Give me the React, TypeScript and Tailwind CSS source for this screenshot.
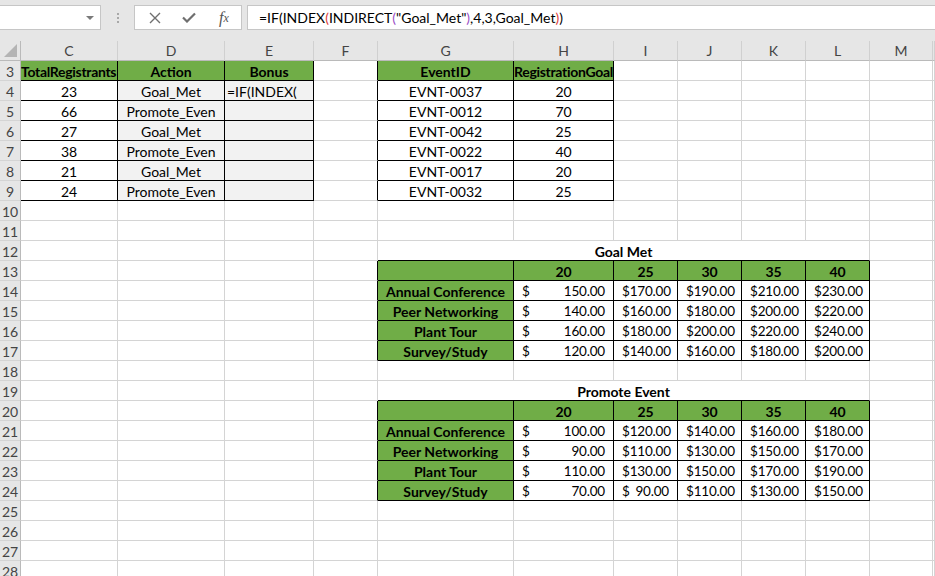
import clsx from "clsx";

type Cell = {
  t?: string;
  b?: boolean;
  bg?: "g" | "s";
  box?: boolean;
  al?: "c" | "l" | "acc" | "ov";
  span?: number;
};

const COLS = ["C", "D", "E", "F", "G", "H", "I", "J", "K", "L", "M", "N"];
const ROWS = Array.from({ length: 26 }, (_, i) => i + 3);

const cells: Record<string, Cell> = {};
const skip = new Set<string>();
const set = (k: string, c: Cell) => {
  cells[k] = c;
};

// left table
set("C3", { t: "TotalRegistrants", b: true, bg: "g", box: true, al: "ov" });
set("D3", { t: "Action", b: true, bg: "g", box: true });
set("E3", { t: "Bonus", b: true, bg: "g", box: true });
[23, 66, 27, 38, 21, 24].forEach((n, i) => {
  const r = 4 + i;
  set(`C${r}`, { t: String(n), box: true });
  set(`D${r}`, { t: i % 2 ? "Promote_Even" : "Goal_Met", bg: "s", box: true });
  set(`E${r}`, { t: i === 0 ? "=IF(INDEX(" : "", bg: "s", box: true, al: "l" });
});

// event table
set("G3", { t: "EventID", b: true, bg: "g", box: true });
set("H3", { t: "RegistrationGoal", b: true, bg: "g", box: true, al: "ov" });
[
  ["EVNT-0037", "20"],
  ["EVNT-0012", "70"],
  ["EVNT-0042", "25"],
  ["EVNT-0022", "40"],
  ["EVNT-0017", "20"],
  ["EVNT-0032", "25"],
].forEach(([id, g], i) => {
  set(`G${4 + i}`, { t: id, box: true });
  set(`H${4 + i}`, { t: g, box: true });
});

const labels = ["Annual Conference", "Peer Networking", "Plant Tour", "Survey/Study"];
const goals = ["20", "25", "30", "35", "40"];

function bonusTable(top: number, title: string, values: number[][]) {
  set(`G${top}`, { t: title, b: true, span: 6 });
  ["H", "I", "J", "K", "L"].forEach((c) => skip.add(`${c}${top}`));
  set(`G${top + 1}`, { bg: "g", box: true });
  ["H", "I", "J", "K", "L"].forEach((c, i) =>
    set(`${c}${top + 1}`, { t: goals[i], b: true, bg: "g", box: true })
  );
  labels.forEach((l, r) => {
    set(`G${top + 2 + r}`, { t: l, b: true, bg: "g", box: true });
    ["H", "I", "J", "K", "L"].forEach((c, i) =>
      set(`${c}${top + 2 + r}`, { t: values[r][i].toFixed(2), box: true, al: "acc" })
    );
  });
}

bonusTable(12, "Goal Met", [
  [150, 170, 190, 210, 230],
  [140, 160, 180, 200, 220],
  [160, 180, 200, 220, 240],
  [120, 140, 160, 180, 200],
]);
bonusTable(19, "Promote Event", [
  [100, 120, 140, 160, 180],
  [90, 110, 130, 150, 170],
  [110, 130, 150, 170, 190],
  [70, 90, 110, 130, 150],
]);

const boxed = (ci: number, r: number) => !!cells[`${COLS[ci]}${r}`]?.box;

function GridRow({ r }: { r: number }) {
  const out = [];
  for (let ci = 0; ci < COLS.length; ci++) {
    const key = `${COLS[ci]}${r}`;
    if (skip.has(key)) continue;
    const c = cells[key] ?? {};
    const span = c.span ?? 1;
    const rightBlack = !!c.box || boxed(ci + span, r);
    let bottomBlack = !!c.box;
    for (let s = 0; s < span; s++) if (boxed(ci + s, r + 1)) bottomBlack = true;
    out.push(
      <div
        key={key}
        className={clsx(
          "flex items-center overflow-hidden whitespace-nowrap border-r border-b pt-[2px] leading-none text-black",
          rightBlack ? "border-r-black" : "border-r-[#d4d4d4]",
          bottomBlack ? "border-b-black" : "border-b-[#d4d4d4]",
          c.bg === "g" && "bg-[#70ad47]",
          c.bg === "s" && "bg-[#f2f2f2]",
          c.b && "font-bold",
          span === 6 && "col-span-6",
          c.al === "acc" ? "justify-between px-[8px] text-[13.5px] tracking-[-0.2px]" : "text-[14px]",
          c.al === "l" && "justify-start pl-[2px]",
          c.al === "ov" && "justify-start tracking-[-0.3px]",
          !c.al && "justify-center"
        )}
      >
        {c.al === "acc" ? (
          <>
            <span>$</span>
            <span>{c.t}</span>
          </>
        ) : (
          c.t
        )}
      </div>
    );
  }
  return (
    <>
      <div className="flex items-center justify-center border-r border-b border-r-[#bababa] border-b-[#d4d4d4] bg-[#e6e6e6] pt-[1px] text-[14px] text-[#444]">
        {r}
      </div>
      {out}
    </>
  );
}

function Toolbar() {
  return (
    <div className="flex h-[41px] items-start bg-[#e6e6e6] pt-[5px]">
      <div className="relative h-[25px] w-[101px] border border-l-0 border-[#c6c6c6] bg-white">
        <svg className="absolute right-[6px] top-[10px]" width="8" height="4" viewBox="0 0 8 4">
          <path d="M0 0h8L4 4z" fill="#7a7a7a" />
        </svg>
      </div>
      <div className="flex w-[33px] flex-col items-center gap-[2px] pt-[8px]">
        <span className="h-[2px] w-[2px] bg-[#a8a8a8]" />
        <span className="h-[2px] w-[2px] bg-[#a8a8a8]" />
        <span className="h-[2px] w-[2px] bg-[#a8a8a8]" />
      </div>
      <div className="flex h-[25px] w-[108px] items-center border border-[#c6c6c6] bg-white">
        <div className="flex w-[36px] justify-center pl-[4px]">
          <svg width="12" height="12" viewBox="0 0 12 12">
            <path d="M1 1l10 10M11 1L1 11" stroke="#6f6f6f" strokeWidth="1.4" />
          </svg>
        </div>
        <div className="flex w-[36px] justify-center">
          <svg width="14" height="11" viewBox="0 0 14 11">
            <path d="M1 5.5l4 4L13 1.5" stroke="#6f6f6f" strokeWidth="2.2" fill="none" />
          </svg>
        </div>
        <div className="flex w-[34px] justify-center font-['Liberation_Serif',serif] text-[16px] italic text-[#555]">
          f<span className="text-[12px] leading-[24px]">x</span>
        </div>
      </div>
      <div className="ml-[5px] flex h-[25px] flex-1 items-center border border-r-0 border-[#c6c6c6] bg-white pl-[11px] text-[14px] text-black">
        <span>=IF(INDEX</span>
        <span className="text-[#e0413a]">(</span>
        <span>INDIRECT</span>
        <span className="text-[#9b4fc6]">(</span>
        <span>"Goal_Met"</span>
        <span className="text-[#9b4fc6]">)</span>
        <span>,4,3,Goal_Met</span>
        <span className="text-[#e0413a]">)</span>
        <span>)</span>
      </div>
    </div>
  );
}

export default function App() {
  return (
    <div className="h-[576px] w-[935px] overflow-hidden bg-white font-['Lato','Liberation_Sans',sans-serif]">
      <Toolbar />
      <div className="grid auto-rows-[20px] grid-cols-[21px_97px_107px_89px_64px_136px_100px_64px_64px_64px_64px_63px_1fr]">
        <div className="relative border-r border-b border-r-[#bababa] border-b-[#bababa] bg-[#e6e6e6]">
          <svg className="absolute bottom-[3px] right-[3px]" width="13" height="13" viewBox="0 0 13 13">
            <path d="M13 0v13H0z" fill="#b4b4b4" />
          </svg>
        </div>
        {COLS.map((c) => (
          <div
            key={c}
            className="flex items-center justify-center border-r border-b border-r-[#d0d0d0] border-b-[#bababa] bg-[#e6e6e6] text-[14px] text-[#444]"
          >
            {c === "N" ? "" : c}
          </div>
        ))}
        {ROWS.map((r) => (
          <GridRow key={r} r={r} />
        ))}
      </div>
    </div>
  );
}
